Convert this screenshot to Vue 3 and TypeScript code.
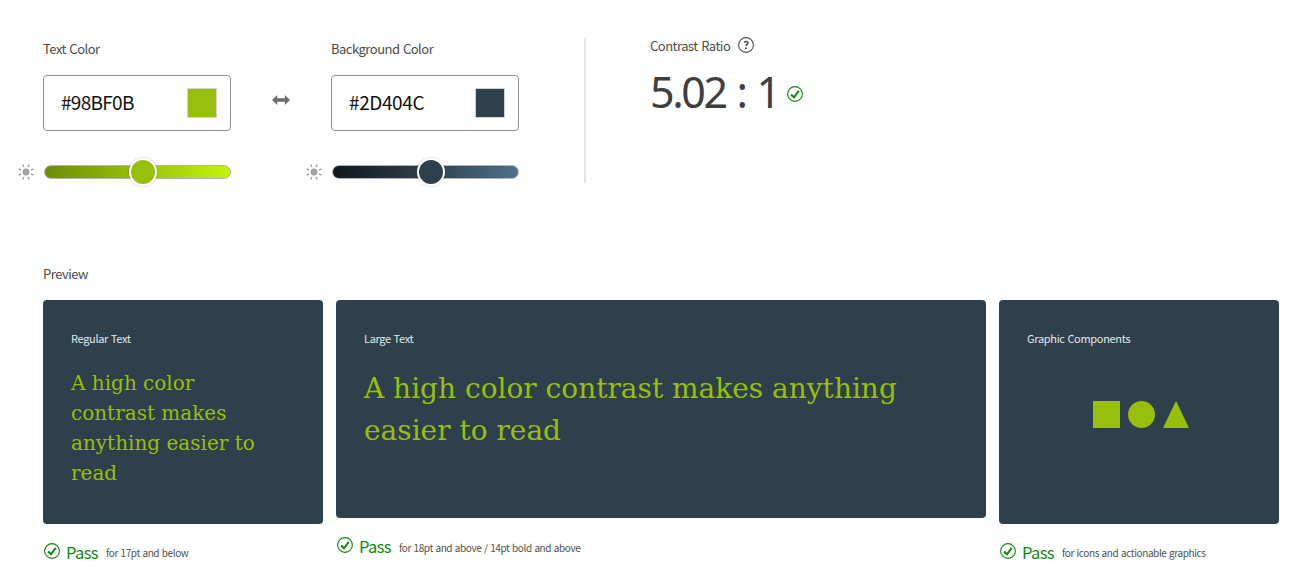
<script setup lang="ts">
interface Swatch {
  id: string
  label: string
  hex: string
}

interface Result {
  kind: string
  title: string
  sample?: string
  note: string
}

const swatches: Swatch[] = [
  { id: 'text', label: 'Text Color', hex: '#98BF0B' },
  { id: 'background', label: 'Background Color', hex: '#2D404C' },
]

const sample = 'A high color contrast makes anything easier to read'

const results: Result[] = [
  { kind: 'regular', title: 'Regular Text', sample, note: 'for 17pt and below' },
  { kind: 'large', title: 'Large Text', sample, note: 'for 18pt and above / 14pt bold and above' },
  { kind: 'graphic', title: 'Graphic Components', note: 'for icons and actionable graphics' },
]

const rays = [22.5, 67.5, 112.5, 157.5, 202.5, 247.5, 292.5, 337.5]
</script>

<template>
  <main class="page">
    <section class="controls">
      <template v-for="(s, i) in swatches" :key="s.id">
        <div v-if="i === 1" class="swap">
          <svg width="18" height="10" viewBox="0 0 18 10">
            <path d="M0 5 5.2 0V3.2H12.8V0L18 5 12.8 10V6.8H5.2V10Z" fill="#6e6e6e" />
          </svg>
        </div>
        <div class="picker" :class="s.id">
          <span class="label">{{ s.label }}</span>
          <div class="field">
            <span class="hex">{{ s.hex }}</span>
            <span class="chip"></span>
          </div>
          <div class="brightness">
            <svg class="sun" width="16" height="16" viewBox="0 0 16 16">
              <circle cx="8" cy="8" r="3.5" fill="#a3a3a3" />
              <path
                v-for="r in rays"
                :key="r"
                d="M8 0V2.6"
                :transform="`rotate(${r} 8 8)`"
                stroke="#a3a3a3"
                stroke-width="1.5"
              />
            </svg>
            <div class="track"><span class="thumb"></span></div>
          </div>
        </div>
      </template>
      <div class="ratio">
        <div class="ratio-head">
          <span class="label ratio-label">Contrast Ratio</span>
          <svg width="16" height="16" viewBox="0 0 16 16">
            <circle cx="8" cy="8" r="7.4" fill="none" stroke="#505050" stroke-width="1.1" />
            <path d="M6 5.5C6.6 4.8 7.3 4.5 8 4.5 9.2 4.5 9.9 5.1 9.9 6 9.9 7.4 8 7.4 8 9.1" fill="none" stroke="#505050" stroke-width="1.5" />
            <circle cx="8" cy="11.2" r="1" fill="#505050" />
          </svg>
        </div>
        <div class="ratio-row">
          <span class="value">5.02 : 1</span>
          <svg width="16" height="16" viewBox="0 0 16 16">
            <circle cx="8" cy="8" r="7.4" fill="none" stroke="#0c8a0c" stroke-width="1.1" />
            <path d="M4.1 8.5 7 11.3 11.8 4.8" fill="none" stroke="#0c8a0c" stroke-width="2" />
          </svg>
        </div>
      </div>
    </section>

    <h2 class="label preview-title">Preview</h2>
    <section class="cards">
      <article v-for="r in results" :key="r.kind" :class="r.kind">
        <div class="card">
          <span class="card-title">{{ r.title }}</span>
          <p v-if="r.sample" class="sample">{{ r.sample }}</p>
          <div v-else class="shapes">
            <svg width="97" height="27" viewBox="0 0 97 27" fill="#98bf0b">
              <rect width="27" height="27" />
              <circle cx="48.5" cy="13.5" r="13.5" />
              <path d="M83 0 96 27H70Z" />
            </svg>
          </div>
        </div>
        <div class="verdict">
          <svg width="16" height="16" viewBox="0 0 16 16">
            <circle cx="8" cy="8" r="7.4" fill="none" stroke="#0c8a0c" stroke-width="1.1" />
            <path d="M4.1 8.5 7 11.3 11.8 4.8" fill="none" stroke="#0c8a0c" stroke-width="2" />
          </svg>
          <span class="pass">Pass</span>
          <span class="note">{{ r.note }}</span>
        </div>
      </article>
    </section>
  </main>
</template>

<style>
body {
  background: #fff;
  overflow: hidden;
}
</style>

<style scoped>
.page {
  box-sizing: border-box;
  width: 1309px;
  height: 585px;
  padding: 38px 0 0 43px;
  overflow: hidden;
  font-family: 'Noto Sans CJK SC', 'Noto Sans', sans-serif;
  white-space: nowrap;
}
svg {
  display: block;
  flex: none;
}
.controls {
  display: flex;
  height: 145px;
}
.label {
  display: block;
  margin: 0;
  font-size: 13px;
  line-height: 20px;
  font-weight: 400;
  letter-spacing: -0.5px;
  word-spacing: 1px;
  color: #4b4b4b;
}
.picker {
  width: 188px;
}
.picker .label {
  margin-top: 1px;
}
.field {
  box-sizing: border-box;
  display: flex;
  align-items: center;
  justify-content: space-between;
  height: 56px;
  margin-top: 16px;
  padding: 0 13px 0 17px;
  border: 1px solid #8e8e8e;
  border-radius: 4px;
}
.hex {
  margin-top: -2px;
  font-size: 19px;
  line-height: 28px;
  letter-spacing: -0.7px;
  color: #111;
}
.background .hex {
  letter-spacing: -0.4px;
}
.chip {
  box-sizing: border-box;
  width: 30px;
  height: 30px;
  border: 1px solid #d3d3d3;
}
.text .chip,
.text .thumb {
  background: #98bf0b;
}
.background .chip,
.background .thumb {
  background: #2d404c;
}
.brightness {
  display: flex;
  align-items: center;
  gap: 10px;
  height: 30px;
  margin: 26px 0 0 -25px;
}
.track {
  box-sizing: border-box;
  display: flex;
  align-items: center;
  justify-content: center;
  width: 187px;
  height: 14px;
  padding-left: 11px;
  border: 1px solid #b5b5b5;
  border-radius: 7px;
}
.text .track {
  background: linear-gradient(90deg, #6f8c08, #98bf0b 50%, #c2f40e);
}
.background .track {
  background: linear-gradient(90deg, #10171b, #2d404c 50%, #4e708a);
}
.thumb {
  flex: none;
  width: 24px;
  height: 24px;
  border: 2px solid #fff;
  border-radius: 50%;
  box-shadow: 0 0 3px rgba(0, 0, 0, 0.2);
}
.swap {
  width: 100px;
  padding-top: 57px;
  box-sizing: border-box;
  display: flex;
  justify-content: center;
}
.ratio {
  margin-left: 65px;
  padding-left: 64px;
  border-left: 2px solid #e6e6e6;
}
.ratio-head {
  display: flex;
  align-items: center;
  gap: 8px;
  height: 14px;
}
.ratio-label {
  width: 80px;
  margin-top: 1px;
}
.ratio-row {
  display: flex;
  align-items: center;
  gap: 10px;
  height: 56px;
  margin-top: 14px;
}
.value {
  width: 127px;
  margin-top: -4px;
  font-family: 'Noto Sans', sans-serif;
  font-size: 43px;
  line-height: 56px;
  letter-spacing: -2.4px;
  word-spacing: 2px;
  color: #3e3e3e;
}
.preview-title {
  margin-top: 81px;
}
.cards {
  display: grid;
  grid-template-columns: 280px 650px 280px;
  gap: 13px;
  margin-top: 16px;
}
.card {
  box-sizing: border-box;
  height: 224px;
  padding: 29px 28px 0;
  border-radius: 4px;
  background: #2d404c;
}
.large .card {
  height: 218px;
}
.card-title {
  display: block;
  font-size: 11px;
  line-height: 18px;
  letter-spacing: -0.32px;
  word-spacing: 0.6px;
  color: #e3e8ea;
}
.sample {
  max-width: 200px;
  margin: 21px 0 0;
  font-family: 'DejaVu Serif', serif;
  font-size: 20px;
  line-height: 30px;
  color: #98bf0b;
  white-space: normal;
}
.large .sample {
  max-width: none;
  font-size: 28px;
  line-height: 42px;
}
.shapes {
  display: flex;
  justify-content: center;
  margin: 54px 0 0 4px;
}
.verdict {
  display: flex;
  align-items: center;
  height: 24px;
  margin: 15px 0 0 1px;
}
.pass {
  width: 32px;
  margin: 2px 0 0 6px;
  font-size: 16.5px;
  line-height: 24px;
  letter-spacing: -0.6px;
  color: #0c8a0c;
}
.note {
  margin: 4px 0 0 8px;
  font-size: 10px;
  line-height: 18px;
  letter-spacing: -0.4px;
  word-spacing: 0.8px;
  color: #505050;
}
.large .note {
  margin-top: 5px;
}
</style>
